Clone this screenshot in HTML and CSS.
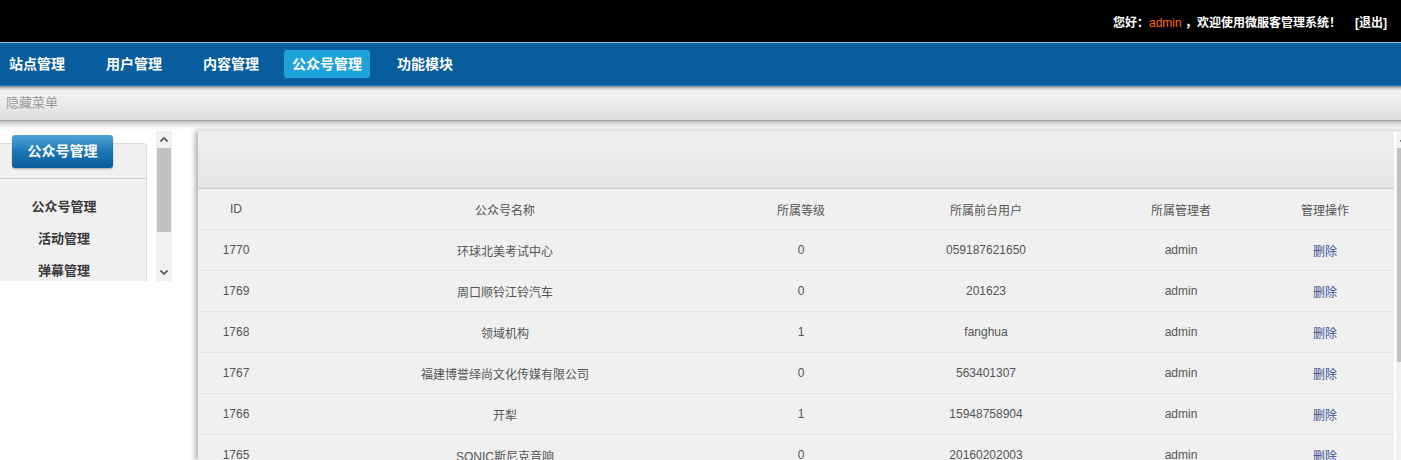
FILE: index.html
```html
<!DOCTYPE html>
<html lang="zh-CN">
<head>
    <meta charset="UTF-8">
    <title>微服客管理系统</title>
    <link rel="stylesheet" href="styles.css">
</head>
<body>
    <div class="topbar">
        <span class="welcome">您好：<em>admin</em> ，欢迎使用微服客管理系统！</span>
        <a class="logout" href="#">[退出]</a>
    </div>

    <div class="nav">
        <ul>
            <li><a href="#">站点管理</a></li>
            <li><a href="#">用户管理</a></li>
            <li><a href="#">内容管理</a></li>
            <li class="active"><a href="#">公众号管理</a></li>
            <li><a href="#">功能模块</a></li>
        </ul>
    </div>

    <div class="subbar">隐藏菜单</div>

    <div class="main">
        <div class="side">
            <div class="side-view">
                <div class="side-panel">
                    <div class="side-title">公众号管理</div>
                    <ul class="side-menu">
                        <li><a href="#">公众号管理</a></li>
                        <li><a href="#">活动管理</a></li>
                        <li><a href="#">弹幕管理</a></li>
                        <li><a href="#">抽奖管理</a></li>
                    </ul>
                </div>
            </div>
            <div class="scrollbar side-bar">
                <div class="sb-btn"><svg width="8" height="5" viewBox="0 0 8 5"><polyline points="0.5,4.5 4,1 7.5,4.5" fill="none" stroke="#505050" stroke-width="1.6"/></svg></div>
                <div class="sb-track"><div class="sb-thumb"></div></div>
                <div class="sb-btn"><svg width="8" height="5" viewBox="0 0 8 5"><polyline points="0.5,0.5 4,4 7.5,0.5" fill="none" stroke="#505050" stroke-width="1.6"/></svg></div>
            </div>
        </div>

        <div class="content">
            <div class="content-view">
                <div class="toolbar"></div>
                <table class="list">
                    <colgroup>
                        <col style="width: 76px">
                        <col style="width: 462px">
                        <col style="width: 130px">
                        <col style="width: 240px">
                        <col style="width: 150px">
                        <col style="width: 138px">
                    </colgroup>
                    <thead>
                        <tr>
                            <th>ID</th>
                            <th>公众号名称</th>
                            <th>所属等级</th>
                            <th>所属前台用户</th>
                            <th>所属管理者</th>
                            <th>管理操作</th>
                        </tr>
                    </thead>
                    <tbody>
                        <tr><td>1770</td><td>环球北美考试中心</td><td>0</td><td>059187621650</td><td>admin</td><td><a href="#">删除</a></td></tr>
                        <tr><td>1769</td><td>周口顺铃江铃汽车</td><td>0</td><td>201623</td><td>admin</td><td><a href="#">删除</a></td></tr>
                        <tr><td>1768</td><td>领域机构</td><td>1</td><td>fanghua</td><td>admin</td><td><a href="#">删除</a></td></tr>
                        <tr><td>1767</td><td>福建博誉绎尚文化传媒有限公司</td><td>0</td><td>563401307</td><td>admin</td><td><a href="#">删除</a></td></tr>
                        <tr><td>1766</td><td>开犁</td><td>1</td><td>15948758904</td><td>admin</td><td><a href="#">删除</a></td></tr>
                        <tr><td>1765</td><td>SONIC斯尼克音响</td><td>0</td><td>20160202003</td><td>admin</td><td><a href="#">删除</a></td></tr>
                    </tbody>
                </table>
            </div>
            <div class="scrollbar main-bar">
                <div class="sb-btn"><svg width="8" height="5" viewBox="0 0 8 5"><polyline points="0.5,4.5 4,1 7.5,4.5" fill="none" stroke="#505050" stroke-width="1.6"/></svg></div>
                <div class="sb-track"><div class="sb-thumb"></div></div>
            </div>
        </div>
    </div>
</body>
</html>
```

FILE: styles.css
```css
body {
    margin: 0;
    padding: 0;
    font-family: 'Liberation Sans', 'Noto Sans CJK SC', sans-serif;
    font-size: 12px;
    background: #fff;
    overflow: hidden;
}

ul {
    margin: 0;
    padding: 0;
    list-style: none;
}

a {
    text-decoration: none;
}

/* top black bar */
.topbar {
    height: 42px;
    background: #000;
    border-bottom: 1px solid #8ccdee;
    display: flex;
    justify-content: flex-end;
    align-items: center;
    padding-right: 14px;
    color: #fff;
    font-weight: bold;
    font-size: 12px;
}

.topbar em {
    font-style: normal;
    font-weight: normal;
    color: #ff6600;
}

.topbar .logout {
    color: #fff;
    margin-left: 14px;
}

/* blue nav */
.nav {
    height: 42px;
    background: #075d9d;
    border-bottom: 1px solid #1b7cc4;
}

.nav ul {
    display: flex;
    gap: 25px;
    padding: 7px 0 0 1px;
}

.nav li a {
    display: block;
    padding: 0 8px;
    line-height: 28px;
    color: #fff;
    font-size: 14px;
    font-weight: bold;
    border-radius: 3px;
}

.nav li.active {
    margin: 0 -6px 0 -8px;
}

.nav li.active a {
    background: #1fa1d9;
}

/* gray sub bar */
.subbar {
    height: 34px;
    line-height: 34px;
    padding-left: 6px;
    color: #9a9a9a;
    font-size: 13px;
    background: linear-gradient(#7c7c7c 0, #c8c8c8 2px, #f4f4f4 5px, #ececec 50%, #dcdcdc 100%);
    border-bottom: 1px solid #a3a3a3;
}

/* body area */
.main {
    display: flex;
    align-items: flex-start;
    padding-top: 10px;
    background: linear-gradient(#bdbdbd, #f0f0f0 5px, #fff 9px) top left / 100% 9px no-repeat;
}

/* fake scrollbars (screenshot keeps them) */
.scrollbar {
    width: 16px;
    display: flex;
    flex-direction: column;
    background: #f1f1f1;
    flex-shrink: 0;
}

.sb-btn {
    height: 17px;
    display: flex;
    align-items: center;
    justify-content: center;
}

.sb-track {
    flex: 1;
    padding: 0 1px;
}

.sb-thumb {
    background: #c1c1c1;
}

.side {
    display: flex;
    height: 150px;
    flex-shrink: 0;
}

.side-view {
    width: 156px;
    overflow: hidden;
}

.side-bar .sb-thumb {
    height: 84px;
}

.side-panel {
    width: 146px;
    margin-top: 12px;
    padding-bottom: 20px;
    background: #f0f0f0;
    border: 1px solid #dcdcdc;
    border-left: none;
    border-radius: 0 4px 0 0;
}

.side-title {
    width: 101px;
    height: 33px;
    line-height: 33px;
    margin: -9px 0 0 12px;
    text-align: center;
    color: #fff;
    font-size: 14px;
    font-weight: bold;
    border-radius: 3px;
    background: linear-gradient(#4ea5d6, #1a74b2 55%, #0b5b95);
    box-shadow: 0 1px 2px rgba(0, 0, 0, 0.3);
}

.side-menu {
    margin-top: 10px;
    padding-top: 12px;
    border-top: 1px solid #cfcfcf;
}

.side-menu li {
    line-height: 32px;
    text-align: center;
    padding-right: 18px;
}

.side-menu a {
    color: #3a3a3a;
    font-size: 13px;
    font-weight: bold;
}

.content {
    display: flex;
    height: 329px;
    margin-left: 26px;
    flex-shrink: 0;
    background: #fff;
    box-shadow: -3px 0 5px rgba(0, 0, 0, 0.3);
}

.content-view {
    width: 1196px;
    margin-right: 2px;
    overflow: hidden;
    background: #f0f0f0;
}

.main-bar .sb-thumb {
    height: 214px;
}

.toolbar {
    height: 57px;
    background: linear-gradient(#efefef, #e5e5e5);
    border-bottom: 1px solid #cdcdcd;
}

.list {
    width: 100%;
    border-collapse: collapse;
    table-layout: fixed;
    color: #555;
    font-size: 12px;
}

.list th,
.list td {
    height: 40px;
    padding: 0;
    text-align: center;
    font-weight: normal;
    border-bottom: 1px solid #e2e2e2;
}

.list td a {
    color: #3b5192;
}
```
